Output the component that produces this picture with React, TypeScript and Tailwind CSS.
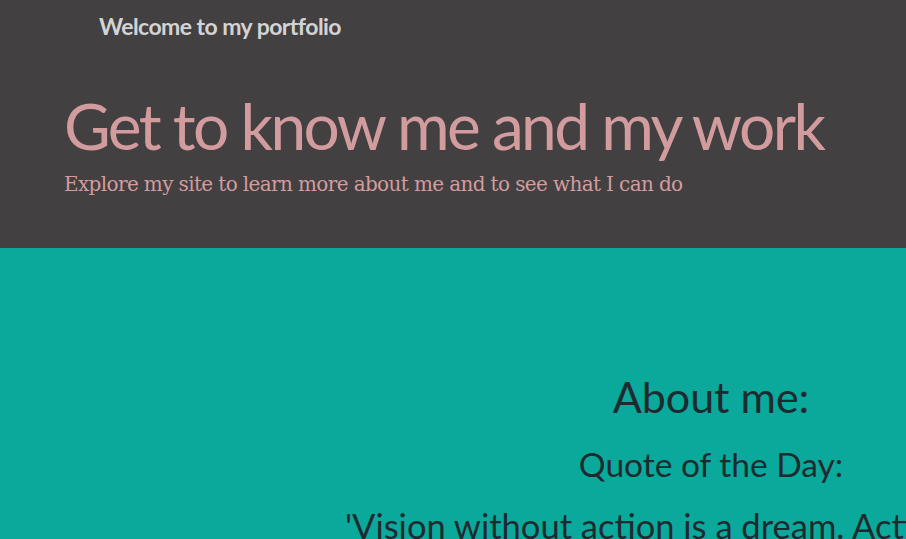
export default function App() {
  return (
    <div className="w-[906px] h-[539px] overflow-hidden bg-[#0aa99b]">
      <header className="h-[248px] bg-[#434042] flex flex-col">
        <div className="pl-[99px] pt-[12px] h-[60px]">
          <div className="font-['Lato',sans-serif] font-bold text-[23px] leading-[28px] text-[#d3d3d3] tracking-[-0.55px] whitespace-nowrap">Welcome to my portfolio</div>
        </div>
        <div className="pl-[64px] pt-[28px]">
          <h1 className="font-['Lato',sans-serif] text-[64px] leading-[76px] tracking-[-2.6px] text-[#d29c9e] whitespace-nowrap">Get to know me and my work</h1>
          <p className="font-['DejaVu_Serif',serif] text-[20px] leading-[28px] tracking-[-0.63px] mt-[6px] text-[#d29c9e] whitespace-nowrap">Explore my site to learn more about me and to see what I can do</p>
        </div>
      </header>
      <section className="flex pt-[125px]">
        <div className="w-[345px] shrink-0" />
        <div className="w-[732px] shrink-0 text-center text-[#1d2a2f] font-['Lato',sans-serif]">
          <h2 className="text-[43px] leading-[48px]">About me:</h2>
          <h3 className="text-[33.5px] leading-[40px] mt-[23px]">Quote of the Day:</h3>
          <p className="text-[34.5px] leading-[40px] mt-[22px] text-left whitespace-nowrap">'Vision without action is a dream. Action without vision is a nightmare.'</p>
        </div>
      </section>
    </div>
  );
}
